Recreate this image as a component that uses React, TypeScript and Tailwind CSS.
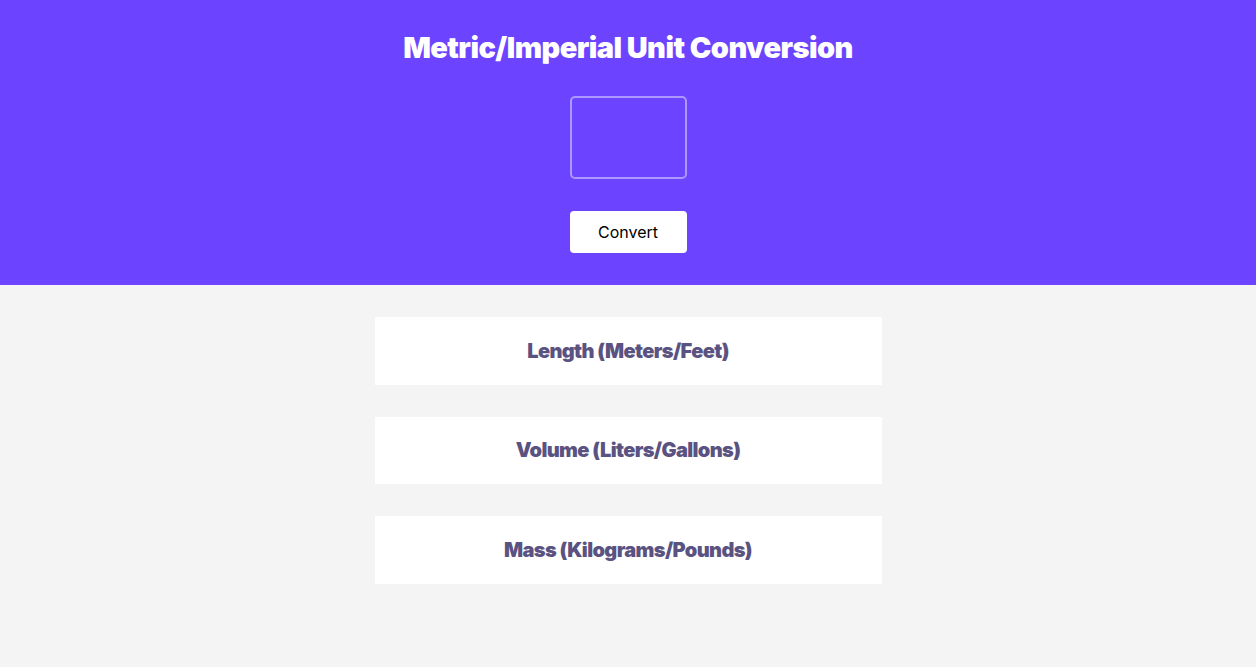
import React from "react";

export default function App() {
  const cards = ["Length (Meters/Feet)", "Volume (Liters/Gallons)", "Mass (Kilograms/Pounds)"];
  return (
    <div className="min-h-[667px] bg-[#f4f4f4] font-['Inter',sans-serif]">
      <header className="bg-[#6c43ff] h-[285px] flex flex-col items-center pt-[30px]">
        <h1 className="text-white text-[29px] leading-[36px] font-black tracking-[-0.55px]">
          Metric/Imperial Unit Conversion
        </h1>
        <input
          type="text"
          className="mt-[30px] w-[117px] h-[83px] rounded-[5px] border-2 border-[#ad98ff] bg-transparent outline-none text-white text-center text-4xl"
        />
        <button className="mt-[32px] w-[117px] h-[42px] rounded-[4px] bg-white text-black text-[16px]">
          Convert
        </button>
      </header>
      <main className="flex flex-col items-center gap-[32px] pt-[32px]">
        {cards.map((c) => (
          <div key={c} className="w-[507px] h-[67.5px] bg-white flex items-center justify-center">
            <h2 className="text-[20px] font-black tracking-[-0.62px] text-[#5a5281]">{c}</h2>
          </div>
        ))}
      </main>
    </div>
  );
}
